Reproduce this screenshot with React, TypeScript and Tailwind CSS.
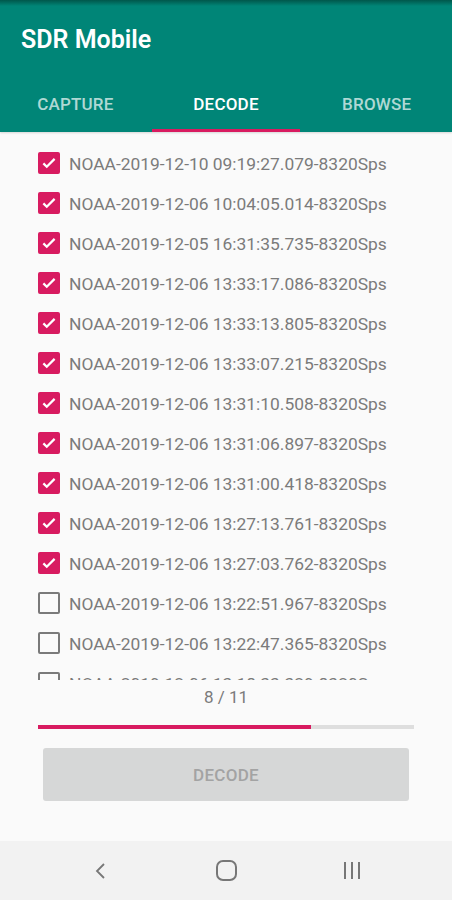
import React from 'react';

const files = [
  { name: 'NOAA-2019-12-10 09:19:27.079-8320Sps', checked: true },
  { name: 'NOAA-2019-12-06 10:04:05.014-8320Sps', checked: true },
  { name: 'NOAA-2019-12-05 16:31:35.735-8320Sps', checked: true },
  { name: 'NOAA-2019-12-06 13:33:17.086-8320Sps', checked: true },
  { name: 'NOAA-2019-12-06 13:33:13.805-8320Sps', checked: true },
  { name: 'NOAA-2019-12-06 13:33:07.215-8320Sps', checked: true },
  { name: 'NOAA-2019-12-06 13:31:10.508-8320Sps', checked: true },
  { name: 'NOAA-2019-12-06 13:31:06.897-8320Sps', checked: true },
  { name: 'NOAA-2019-12-06 13:31:00.418-8320Sps', checked: true },
  { name: 'NOAA-2019-12-06 13:27:13.761-8320Sps', checked: true },
  { name: 'NOAA-2019-12-06 13:27:03.762-8320Sps', checked: true },
  { name: 'NOAA-2019-12-06 13:22:51.967-8320Sps', checked: false },
  { name: 'NOAA-2019-12-06 13:22:47.365-8320Sps', checked: false },
  { name: 'NOAA-2019-12-06 13:18:33.329-8320Sps', checked: false },
];

const CheckBox = ({ checked }: { checked: boolean }) =>
  checked ? (
    <span className="w-[22px] h-[22px] rounded-[2px] bg-[#d81b60] flex items-center justify-center shrink-0">
      <svg width="18" height="18" viewBox="0 0 24 24">
        <path d="M4.5 12.5l4.5 4.5 10.5-10.5" fill="none" stroke="#fff" strokeWidth="3" />
      </svg>
    </span>
  ) : (
    <span className="w-[22px] h-[22px] rounded-[2px] border-2 border-[#7a7a7a] shrink-0" />
  );

export default function App() {
  const done = 8;
  const total = 11;

  return (
    <div className="w-[452px] h-[900px] flex flex-col bg-[#fafafa] overflow-hidden" style={{ fontFamily: 'Roboto, sans-serif' }}>
      <div className="bg-[#008577] h-[72px] flex items-center px-[21px] relative">
        <div className="absolute top-0 left-0 right-0 h-[6px] bg-gradient-to-b from-[#00574b] to-[#008577]" />
        <h1 className="text-white text-[25px] font-semibold mt-[7px]">SDR Mobile</h1>
      </div>
      <div className="bg-[#008577] h-[60px] grid grid-cols-3 shadow-[0_1px_2px_rgba(0,0,0,0.15)]">
        {['CAPTURE', 'DECODE', 'BROWSE'].map((t, i) => (
          <div key={t} className="flex flex-col">
            <div className={`flex-1 flex items-center justify-center pt-[9px] text-[17px] font-medium tracking-[0.2px] ${i === 1 ? 'text-white' : 'text-white/70'}`}>
              {t}
            </div>
            <div className={`h-[3px] mx-[1px] ${i === 1 ? 'bg-[#d81b60]' : ''}`} />
          </div>
        ))}
      </div>

      <div className="h-[548px] overflow-hidden pt-[11px]">
        {files.map((f) => (
          <div key={f.name} className="h-[40px] flex items-center pl-[38px] gap-[9px]">
            <CheckBox checked={f.checked} />
            <span className="text-[17.4px] leading-[20px] text-[#7b7b7b] whitespace-nowrap mt-[2px]">{f.name}</span>
          </div>
        ))}
      </div>

      <div className="text-center text-[17px] text-[#7b7b7b] h-[30px] leading-[30px] mt-[2px]">
        {done} / {total}
      </div>
      <div className="mx-[38px] h-[4px] bg-[#dedede] mt-[13px]">
        <div className="h-full bg-[#d81b60]" style={{ width: `${(done / total) * 100}%` }} />
      </div>
      <button className="mx-[43px] mt-[19px] h-[53px] rounded-[3px] bg-[#d6d7d7] text-[#a3a3a3] text-[17px] font-medium tracking-[0.3px] pt-[2px]">
        DECODE
      </button>

      <div className="mt-auto h-[59px] bg-[#f2f2f2] flex items-center justify-center gap-[105px]">
        <svg width="20" height="20" viewBox="0 0 20 20">
          <path d="M13 3L6 10l7 7" fill="none" stroke="#777" strokeWidth="1.8" />
        </svg>
        <span className="w-[21px] h-[21px] rounded-[7px] border-2 border-[#777]" />
        <div className="w-[20px] flex justify-center gap-[5px]">
          <span className="w-[2px] h-[17px] bg-[#777]" />
          <span className="w-[2px] h-[17px] bg-[#777]" />
          <span className="w-[2px] h-[17px] bg-[#777]" />
        </div>
      </div>
    </div>
  );
}
